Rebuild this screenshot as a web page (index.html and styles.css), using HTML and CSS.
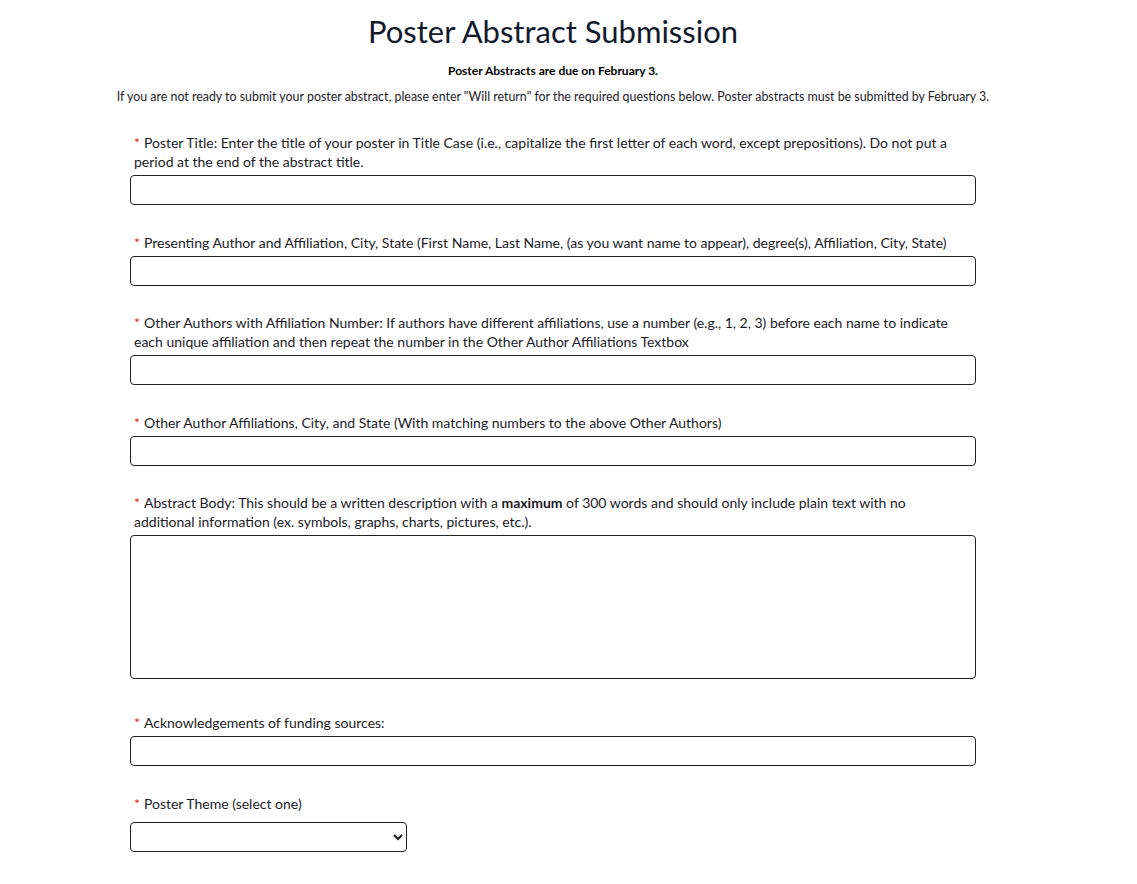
FILE: index.html
```html
<!DOCTYPE html>
<html lang="en">
<head>
  <meta charset="UTF-8">
  <meta name="viewport" content="width=device-width, initial-scale=1.0">
  <title>Poster Abstract Submission</title>
  <link rel="stylesheet" href="styles.css">
</head>
<body>
  <div id="page">
    <h1 class="title">Poster Abstract Submission</h1>
    <p class="due">Poster Abstracts are due on February 3.</p>
    <p class="intro">If you are not ready to submit your poster abstract, please enter "Will return" for the required questions below. Poster abstracts must be submitted by February 3.</p>
    <form class="abstract-form">
      <div class="field">
        <label for="title"><span class="req">*</span>Poster Title: Enter the title of your poster in Title Case (i.e., capitalize the first letter of each word, except prepositions). Do not put a period at the end of the abstract title.</label>
        <input type="text" id="title">
      </div>
      <div class="field">
        <label for="presenter"><span class="req">*</span>Presenting Author and Affiliation, City, State (First Name, Last Name, (as you want name to appear), degree(s), Affiliation, City, State)</label>
        <input type="text" id="presenter">
      </div>
      <div class="field">
        <label for="others"><span class="req">*</span>Other Authors with Affiliation Number: If authors have different affiliations, use a number (e.g., 1, 2, 3) before each name to indicate each unique affiliation and then repeat the number in the Other Author Affiliations Textbox</label>
        <input type="text" id="others">
      </div>
      <div class="field">
        <label for="affiliations"><span class="req">*</span>Other Author Affiliations, City, and State (With matching numbers to the above Other Authors)</label>
        <input type="text" id="affiliations">
      </div>
      <div class="field">
        <label for="body"><span class="req">*</span>Abstract Body: This should be a written description with a <b>maximum</b> of 300 words and should only include plain text with no additional information (ex. symbols, graphs, charts, pictures, etc.).</label>
        <textarea id="body"></textarea>
      </div>
      <div class="field">
        <label for="funding"><span class="req">*</span>Acknowledgements of funding sources:</label>
        <input type="text" id="funding">
      </div>
      <div class="field select-field">
        <label for="theme"><span class="req">*</span>Poster Theme (select one)</label>
        <select id="theme">
          <option value=""></option>
          <option>Clinical Research</option>
          <option>Basic Science</option>
          <option>Education</option>
        </select>
      </div>
    </form>
  </div>
</body>
</html>
```

FILE: styles.css
```css
body, html {
  margin: 0;
  padding: 0;
  background: #fff;
  font-family: Lato, "Noto Sans", sans-serif;
  color: #1b1b1f;
}
#page {
  width: 1106px;
  padding-top: 12px;
}
.title {
  margin: 0;
  text-align: center;
  font-size: 31px;
  font-weight: 400;
  line-height: 38px;
  color: #101a2c;
}
.due {
  margin: 13px 0 0;
  text-align: center;
  font-size: 12px;
  font-weight: 700;
  line-height: 16px;
  color: #000;
}
.intro {
  margin: 10px 0 0;
  text-align: center;
  font-size: 12.4px;
  line-height: 16px;
}
.abstract-form {
  width: 846px;
  margin: 28px auto 0;
}
.field {
  display: flex;
  flex-direction: column;
  margin-bottom: 27.6px;
}
.field label {
  padding: 0 20px 0 4px;
  margin-bottom: 4px;
  font-size: 14px;
  line-height: 19px;
  color: #1b1b1f;
}
.req {
  display: inline-block;
  margin-right: 4px;
  color: #d8232a;
}
.field input,
.field textarea,
.field select {
  box-sizing: border-box;
  height: 30px;
  margin: 0;
  border: 1px solid #222;
  border-radius: 4px;
  background: #fff;
  font-family: inherit;
  font-size: 13px;
}
.field textarea {
  height: 144px;
  resize: none;
  margin-bottom: 6px;
}
.select-field label {
  margin-bottom: 9px;
}
.field select {
  width: 277px;
  color: #1b1b1f;
}
```
